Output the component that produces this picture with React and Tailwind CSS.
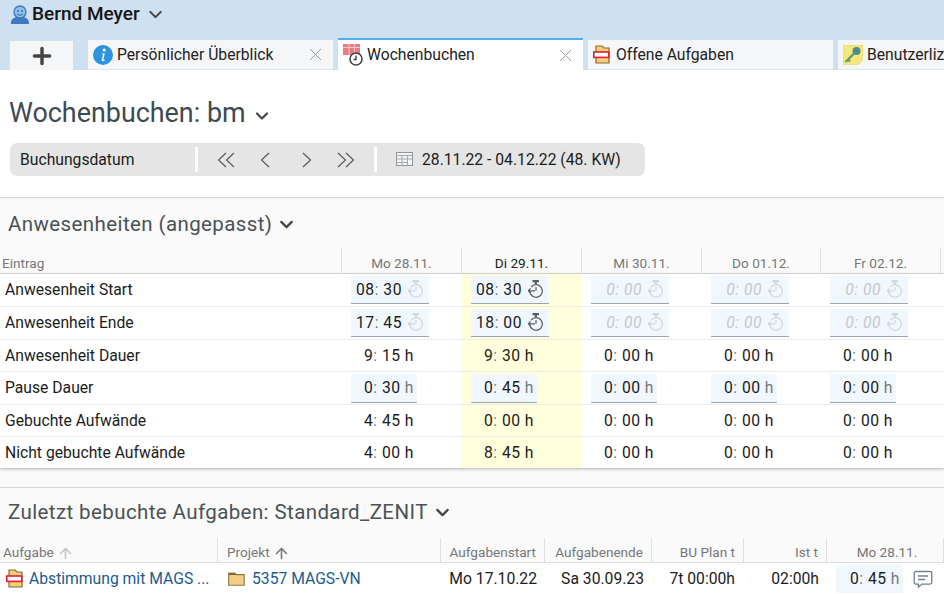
import React from "react";
import { ChevronDown, Plus, X, ArrowUp } from "lucide-react";

const UserIcon = () => (
  <svg width="20" height="20" viewBox="0 0 20 20" className="shrink-0">
    <path d="M1 19c0-4 3-5 5-6h8c2 1 5 2 5 6v1H1z" fill="#3f79c4" />
    <circle cx="10" cy="8" r="6" fill="#8fc0e8" stroke="#3f79c4" strokeWidth="1.4" />
    <circle cx="8" cy="7" r="0.9" fill="#2f5f9f" />
    <circle cx="12" cy="7" r="0.9" fill="#2f5f9f" />
    <path d="M7 10c1.5 1.5 4.5 1.5 6 0" fill="none" stroke="#2f5f9f" strokeWidth="1" />
  </svg>
);

const InfoIcon = () => (
  <svg width="20" height="20" viewBox="0 0 20 20" className="shrink-0">
    <circle cx="10" cy="10" r="10" fill="#2f94e0" />
    <circle cx="11.2" cy="5" r="1.5" fill="#fff" />
    <path d="M9.2 8.4h2.6l-1.5 6.4h1.4l-.3 1.2H8.6l1.4-6.4H8.9z" fill="#fff" />
  </svg>
);

const WeekIcon = () => (
  <svg width="22" height="22" viewBox="0 0 22 22" className="shrink-0">
    <rect x="0" y="0" width="17" height="11" fill="#ea7b80" />
    <path d="M0 3.5h17M6 0v11M11.5 0v11" stroke="#f8c4c6" strokeWidth="1" />
    <circle cx="13" cy="15" r="6" fill="#fff" stroke="#444" strokeWidth="1.6" />
    <path d="M13 11.5v4h-2.5" fill="none" stroke="#444" strokeWidth="1.4" />
  </svg>
);

const TaskIcon = () => (
  <svg width="18" height="19" viewBox="0 0 18 19" className="shrink-0">
    <path d="M3 1h6l2 2h5v15H3z" fill="#f3cf7c" stroke="#8a6a2a" strokeWidth="1.2" />
    <rect x="0.8" y="7" width="15" height="5.4" fill="#fff" stroke="#e0202c" strokeWidth="1.6" />
  </svg>
);

const KeyIcon = () => (
  <svg width="20" height="20" viewBox="0 0 20 20" className="shrink-0">
    <path d="M0 0h20v15l-5 5H0z" fill="#f4e77c" stroke="#ddd08a" strokeWidth="0.6" />
    <circle cx="13.5" cy="6" r="4" fill="#4d8c8c" />
    <path d="M11 8.5L2.5 17M5 14.5l2 2" stroke="#5f9a6a" strokeWidth="2.2" fill="none" />
  </svg>
);

const FolderIcon = () => (
  <svg width="17" height="14" viewBox="0 0 17 14" className="shrink-0">
    <path d="M.7 1h6l1.5 1.6h8v10.7H.7z" fill="#f3cf86" stroke="#8c7448" strokeWidth="1.1" />
    <path d="M1 1.5h6l1.2 1.4H1z" fill="#6b5a3a" />
  </svg>
);

const TableIcon = () => (
  <svg width="17" height="14" viewBox="0 0 17 14" className="shrink-0">
    <rect x="0.5" y="0.5" width="16" height="13" fill="#f4f4f4" stroke="#8f979c" />
    <path d="M.5 3.5h16M.5 7h16M.5 10.5h11M6 3.5v10M11.5 3.5v10" stroke="#a3abb0" strokeWidth="1" fill="none" />
  </svg>
);

const CommentIcon = () => (
  <svg width="20" height="19" viewBox="0 0 20 19" className="shrink-0">
    <path d="M3 1.5h14a1.8 1.8 0 0 1 1.8 1.8v9a1.8 1.8 0 0 1-1.8 1.8H9l-3.5 3v-3H3a1.8 1.8 0 0 1-1.8-1.8v-9A1.8 1.8 0 0 1 3 1.5z" fill="none" stroke="#6f8290" strokeWidth="1.3" />
    <path d="M5 6h10M5 9.5h7" stroke="#6f8290" strokeWidth="1.3" />
  </svg>
);

const StopwatchIcon = ({ active }) => (
  <svg width="16" height="19" viewBox="0 0 16 19" className="shrink-0">
    <g fill="none" stroke={active ? "#5c5c5c" : "#d3d7da"} strokeWidth="1.2">
      <path d="M4.5 1.2h6.5M7.8 1.2v3" strokeWidth="2.2" />
      <path d="M3.2 7a6.3 6.3 0 1 1-1.4 4.6" />
      <path d="M0 10.8h7M2.6 8.4L0.4 10.8l2.2 2.4" />
      <path d="M8 7v3.8" />
    </g>
  </svg>
);

// toolbar arrows, thin and taller than the lucide ones
const NavArrow = ({ dir, double, className = "" }) => (
  <svg width={double ? 18 : 10} height="16" viewBox={double ? "0 0 18 16" : "0 0 10 16"} fill="none" stroke="#555" strokeWidth="1.1" className={`shrink-0 ${className}`}>
    {dir === "left" ? (
      double ? (
        <path d="M9 1L1.5 8 9 15M17 1L9.5 8 17 15" />
      ) : (
        <path d="M9 1L1.5 8 9 15" />
      )
    ) : double ? (
      <path d="M1 1l7.5 7L1 15M9 1l7.5 7L9 15" />
    ) : (
      <path d="M1 1l7.5 7L1 15" />
    )}
  </svg>
);

const Time = ({ value, muted }) => {
  const [a, b] = value.split(":");
  return (
    <span className={muted ? "italic text-[#c4c9cd] tracking-[0.5px]" : "text-[#1c1c1c] tracking-[0.5px]"}>
      {a}
      <span className={muted ? "" : "text-[#777]"}>:</span> {b}
    </span>
  );
};

const TimeBox = ({ value, active }) => (
  <div className="ml-[9px] flex h-[28px] w-[78px] items-center justify-end gap-[6px] border-b border-[#9aa7b3] bg-[#f0f7fe] pr-[5px]">
    <Time value={value} muted={value === "0:00"} />
    <StopwatchIcon active={active} />
  </div>
);

const HourBox = ({ value }) => (
  <div className="ml-[9px] flex h-[29px] w-[66px] items-center border-b border-[#9aa7b3] bg-[#f0f7fe] pl-[13px]">
    <Time value={value} />
    <span className="ml-[4px] text-[#777]">h</span>
  </div>
);

const Hours = ({ value }) => (
  <div className="flex h-full items-center pl-[22px]">
    <Time value={value} />
    <span className="ml-[4px] text-[#1c1c1c]">h</span>
  </div>
);

const days = [
  ["Mo 28.11.", false],
  ["Di 29.11.", true],
  ["Mi 30.11.", false],
  ["Do 01.12.", false],
  ["Fr 02.12.", false],
];

const rows = [
  { label: "Anwesenheit Start", kind: "time", h: "h-[33px]", values: ["08:30", "08:30", "0:00", "0:00", "0:00"] },
  { label: "Anwesenheit Ende", kind: "time", h: "h-[33px]", values: ["17:45", "18:00", "0:00", "0:00", "0:00"] },
  { label: "Anwesenheit Dauer", kind: "hours", h: "h-[32px]", values: ["9:15", "9:30", "0:00", "0:00", "0:00"] },
  { label: "Pause Dauer", kind: "box", h: "h-[33px]", values: ["0:30", "0:45", "0:00", "0:00", "0:00"] },
  { label: "Gebuchte Aufwände", kind: "hours", h: "h-[32px]", values: ["4:45", "0:00", "0:00", "0:00", "0:00"] },
  { label: "Nicht gebuchte Aufwände", kind: "hours", h: "h-[31px]", values: ["4:00", "8:45", "0:00", "0:00", "0:00"] },
];

const grid = "grid grid-cols-[342px_120px_120px_120px_119px_120px_3px]";

const Tab = ({ icon, label, active, closable = true, className = "", gap = "ml-[3px]" }) => (
  <div
    className={`flex w-[245px] shrink-0 items-center pl-[5px] pr-[7px] ${
      active ? "h-[32px] border-t-2 border-[#4fb0ea] bg-white" : "h-[30px] border-b border-[#e3e6e9] bg-[#f5f6f8]"
    } ${className}`}
  >
    {icon}
    <span className={`${gap} flex-1 whitespace-nowrap text-[15.7px] text-[#222]`}>{label}</span>
    {closable && <X size={21} strokeWidth={1.1} className="text-[#999]" />}
  </div>
);

const SectionTitle = ({ children }) => (
  <div className="flex items-center gap-[4px] pl-[8px] text-[20.5px] tracking-[0.4px] text-[#4a5257]">
    {children}
    <ChevronDown size={21} strokeWidth={2.5} className="text-[#444]" />
  </div>
);

const taskCols = [
  ["Projekt", 223],
  ["Aufgabenstart", 104],
  ["Aufgabenende", 107],
  ["BU Plan t", 92],
  ["Ist t", 83],
  ["Mo 28.11.", 117],
];

export default function App() {
  return (
    <div className="h-[594px] w-[944px] overflow-hidden bg-white font-['Roboto',sans-serif] text-[15.7px] text-[#1c1c1c]">
      {/* Header */}
      <header className="flex h-[70px] flex-col bg-[#cfe0f0]">
        <div className="flex h-[38px] items-center pl-[10px] pb-[12px] pt-[2px]">
          <UserIcon />
          <span className="ml-[2px] text-[19px] font-medium text-[#161616]">Bernd Meyer</span>
          <ChevronDown size={21} strokeWidth={2.4} className="ml-[5px] text-[#444]" />
        </div>
        <div className="flex items-end overflow-hidden">
          <div className="ml-[10px] flex h-[29px] w-[63px] shrink-0 items-center justify-center bg-[#f5f6f8]">
            <Plus size={26} strokeWidth={3.2} className="text-[#444]" />
          </div>
          <Tab className="ml-[15px]" icon={<InfoIcon />} label="Persönlicher Überblick" gap="ml-[4px]" />
          <Tab className="ml-[5px]" icon={<WeekIcon />} label="Wochenbuchen" active gap="ml-[2px]" />
          <Tab className="ml-[5px]" icon={<TaskIcon />} label="Offene Aufgaben" closable={false} gap="ml-[5px]" />
          <Tab className="ml-[5px]" icon={<KeyIcon />} label="Benutzerlizenzen" closable={false} gap="ml-[4px]" />
        </div>
      </header>

      {/* Title */}
      <div className="flex h-[73px] items-center gap-[6px] pl-[9px] pt-[13px] text-[26.9px] text-[#404a52]">
        Wochenbuchen: bm
        <ChevronDown size={20} strokeWidth={2.6} className="mt-[5px] text-[#444]" />
      </div>

      {/* Toolbar */}
      <div className="ml-[10px] flex h-[33px] w-[635px] items-center rounded-[7px] bg-[#e5e5e5]">
        <span className="w-[185px] pl-[10px]">Buchungsdatum</span>
        <div className="h-[25px] w-[3px] bg-white" />
        <div className="flex w-[176px] items-center pl-[19px]">
          <NavArrow dir="left" double />
          <NavArrow dir="left" className="ml-[25px]" />
          <NavArrow dir="right" className="ml-[32px]" />
          <NavArrow dir="right" double className="ml-[25px]" />
        </div>
        <div className="h-[25px] w-[3px] bg-white" />
        <div className="ml-[19px] flex items-center gap-[9px]">
          <TableIcon />
          <span>28.11.22 - 04.12.22 (48. KW)</span>
        </div>
      </div>

      {/* Anwesenheiten */}
      <section className="mt-[21px] border-t border-[#d5d5d5] bg-[#fafafa]">
        <div className="flex h-[50px] items-center pt-[3px]">
          <SectionTitle>Anwesenheiten (angepasst)</SectionTitle>
        </div>
        <div className={`${grid} h-[26px] border-b border-[#dcdcdc] text-[13.6px] text-[#777]`}>
          <div className="flex items-end border-r border-[#e2e2e2] pl-[2px]">Eintrag</div>
          {days.map(([day, today]) => (
            <div key={day} className={`flex items-end justify-center border-r border-[#e2e2e2] ${today ? "text-[#222]" : ""}`}>
              {day}
            </div>
          ))}
          <div />
        </div>
        <div className="bg-white shadow-[0_1px_3px_rgba(0,0,0,0.3)]">
          {rows.map((row) => (
            <div key={row.label} className={`${grid} ${row.h} border-b border-[#ececec] last:border-b-0`}>
              <div className="flex items-center pl-[5px]">{row.label}</div>
              {row.values.map((v, i) => (
                <div key={i} className={`flex items-center ${i === 1 ? "bg-[#ffffdc]" : ""}`}>
                  {row.kind === "time" && <TimeBox value={v} active={i === 1} />}
                  {row.kind === "box" && <HourBox value={v} />}
                  {row.kind === "hours" && <Hours value={v} />}
                </div>
              ))}
            </div>
          ))}
        </div>
        <div className="h-[19px]" />
      </section>

      {/* Zuletzt bebuchte Aufgaben */}
      <section className="border-t border-[#d5d5d5] bg-[#fafafa]">
        <div className="flex h-[50px] items-center pb-[1px]">
          <SectionTitle>Zuletzt bebuchte Aufgaben: Standard_ZENIT</SectionTitle>
        </div>
        <div className="flex h-[25px] border-b border-[#dcdcdc] text-[13.6px] text-[#777]">
          <div className="flex w-[218px] items-end gap-[3px] border-r border-[#e2e2e2] pl-[3px]">
            Aufgabe <ArrowUp size={17} strokeWidth={2.2} className="text-[#c4c4c4]" />
          </div>
          {taskCols.map(([name, width], i) => (
            <div
              key={name}
              style={{ width }}
              className={`flex items-end gap-[3px] border-r border-[#e2e2e2] ${
                i === 0 ? "pl-[9px]" : i === 5 ? "justify-center pl-[4px]" : "justify-end pr-[8px]"
              }`}
            >
              {name}
              {i === 0 && <ArrowUp size={17} strokeWidth={2.2} className="text-[#777]" />}
            </div>
          ))}
        </div>
        <div className="flex h-[32px] items-center bg-white">
          <div className="flex w-[218px] items-center gap-[5px] pl-[6px] text-[#1d5b8c]">
            <TaskIcon />
            <span>Abstimmung mit MAGS ...</span>
          </div>
          <div className="flex w-[223px] items-center gap-[7px] pl-[10px] text-[#1d5b8c]">
            <FolderIcon />
            <span>5357 MAGS-VN</span>
          </div>
          <div className="w-[104px] pr-[8px] text-right">Mo 17.10.22</div>
          <div className="w-[107px] pr-[8px] text-right">Sa 30.09.23</div>
          <div className="w-[92px] pr-[9px] text-right">7t 00:00h</div>
          <div className="w-[83px] pr-[8px] text-right">02:00h</div>
          <div className="ml-[9px] flex h-[28px] w-[67px] items-center bg-[#f0f7fe] pl-[14px]">
            <Time value="0:45" />
            <span className="ml-[4px] text-[#777]">h</span>
          </div>
          <div className="ml-[10px]">
            <CommentIcon />
          </div>
        </div>
      </section>
    </div>
  );
}
